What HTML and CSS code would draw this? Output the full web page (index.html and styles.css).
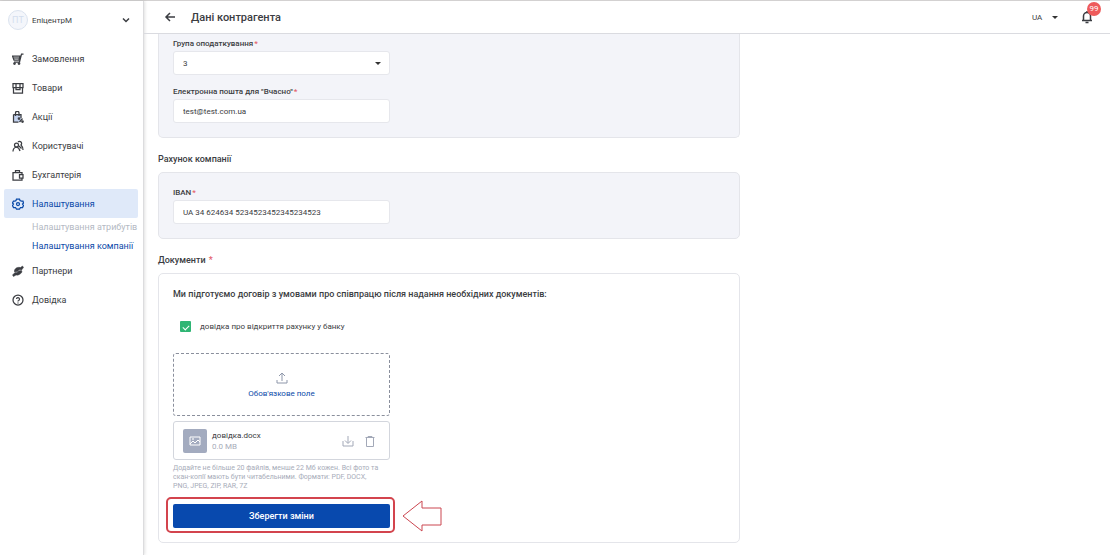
FILE: index.html
```html
<!DOCTYPE html>
<html lang="uk">
<head>
  <meta charset="UTF-8" />
  <meta name="viewport" content="width=device-width, initial-scale=1" />
  <title>Дані контрагента</title>
  <link rel="stylesheet" href="styles.css">
</head>
<body>

  <div class="layout">

    <aside class="sidebar">
      <button type="button" class="company">
        <span class="avatar">ПТ</span>
        <span class="company-name">ЕпіцентрМ</span>
        <svg class="chevron" viewBox="0 0 8 8"><path d="M1 2.500 4 5.500l3-3" /></svg>
      </button>

      <nav class="menu">
        <a href="#" class="menu-item">
          <svg class="icon" viewBox="0 0 24 24"><path d="M1 6h15l-2 8H4zM23 2h-4l-4 16H4" /><path d="M3 10h12" /><circle cx="5" cy="21" r="1.500" /><circle cx="14" cy="21" r="1.500" /></svg>
          Замовлення
        </a>
        <a href="#" class="menu-item">
          <svg class="icon" viewBox="0 0 24 24"><path d="M2 3h20v8H2zM3 11v11h18V11M8 3v8M16 3v8M8 11v4h8v-4" /></svg>
          Товари
        </a>
        <a href="#" class="menu-item">
          <svg class="icon" viewBox="0 0 24 24"><path class="tint" d="M3 7h15v15H3z" /><path d="M7 10V4a3 3 0 0 1 7 0v6M3 7h15v7M3 7v15h10" /><circle cx="14" cy="15" r="1.500" /><circle cx="21" cy="21" r="1.500" /><path d="m21 15-6 7" /></svg>
          Акції
        </a>
        <a href="#" class="menu-item">
          <svg class="icon" viewBox="0 0 24 24"><circle cx="9" cy="10" r="4" /><path d="M2 23c0-5 3-8 7-9 4 1 6 4 7 8M12 4a4 4 0 1 1 6 6c3 3 4 6 4 10M14 12l5 5" /></svg>
          Користувачі
        </a>
        <a href="#" class="menu-item">
          <svg class="icon" viewBox="0 0 24 24"><path d="M20 11V7H2v15h18v-4M7 7V3h8v4M22 11h-7v7h7z" /></svg>
          Бухгалтерія
        </a>
        <a href="#" class="menu-item active">
          <svg class="icon" viewBox="0 0 24 24"><path d="M9 2h6l1 3 3 1 3 0 1 4-2 2 2 3-2 4-4 0-2 3H9l-2-3-4 0-2-4 2-3-2-2 2-4 3 0 2-1z" /><circle cx="12" cy="12" r="3" /></svg>
          Налаштування
        </a>
        <div class="submenu">
          <a href="#" class="submenu-item muted">Налаштування атрибутів</a>
          <a href="#" class="submenu-item">Налаштування компанії</a>
        </div>
        <a href="#" class="menu-item">
          <svg class="icon" viewBox="0 0 24 24"><path class="solid" d="M5 10c3-5 7-6 12-5l4-3 2 3-4 5c-4-1-6 0-8 3l-6 1zM20 14c-3 5-8 7-12 6l-5 3-2-3 5-5c3 1 5 0 7-3l6-1z" /></svg>
          Партнери
        </a>
        <a href="#" class="menu-item">
          <svg class="icon" viewBox="0 0 24 24"><circle cx="12" cy="12" r="10" /><path d="M9 10a3 3 0 1 1 4 3q-1 0-1 2M12 17v2" /></svg>
          Довідка
        </a>
      </nav>
    </aside>

    <div class="page">

      <header class="top-bar">
        <a href="#" class="back" aria-label="Назад">
          <svg viewBox="0 0 12 12"><path d="M11 6H2M6 2 2 6l4 4" /></svg>
        </a>
        <h1>Дані контрагента</h1>
        <div class="lang">
          <select aria-label="Мова">
            <option>UA</option>
            <option>EN</option>
          </select>
        </div>
        <button type="button" class="bell" aria-label="Сповіщення">
          <svg viewBox="0 0 14 14"><path d="M2 10.500h10M3.500 10V6a3.500 3.500 0 0 1 7 0v4M7 2.500V1M5.500 12.500h3" /></svg>
          <span class="badge">99</span>
        </button>
      </header>

      <main class="content">
        <section class="card card-top">
          <div class="field">
            <label for="taxGroup">Група оподаткування<span class="req">*</span></label>
            <div class="select-wrap">
              <select id="taxGroup">
                <option>1</option>
                <option>2</option>
                <option selected>3</option>
              </select>
            </div>
          </div>
          <div class="field">
            <label for="email">Електронна пошта для "Вчасно"<span class="req">*</span></label>
            <input type="email" id="email" value="test@test.com.ua" />
          </div>
        </section>

        <h2>Рахунок компанії</h2>
        <section class="card">
          <div class="field">
            <label for="iban">IBAN<span class="req">*</span></label>
            <input type="text" id="iban" value="UA 34 624634 5234523452345234523" />
          </div>
        </section>

        <h2>Документи <span class="req">*</span></h2>
        <section class="card card-white">
          <p class="intro">Ми підготуємо договір з умовами про співпрацю після надання необхідних документів:</p>

          <label class="check">
            <input type="checkbox" checked />
            довідка про відкриття рахунку у банку
          </label>

          <div class="upload">
            <label class="dropzone">
              <input type="file" multiple />
              <svg viewBox="0 0 12 12"><path d="M6 9V1M3 4l3-3 3 3M1 8v3h10V8" /></svg>
              Обов'язкове поле
            </label>

            <div class="file">
              <span class="file-thumb">
                <svg viewBox="0 0 12 12"><path d="M1 2h10v8H1zM1 9l3-3 2 2 3-3 2 2" /><circle cx="4" cy="4" r="0.500" /></svg>
              </span>
              <div class="file-info">
                <span class="file-name">довідка.docx</span>
                <span class="file-size">0.0 MB</span>
              </div>
              <button type="button" class="file-btn" aria-label="Завантажити">
                <svg viewBox="0 0 12 12"><path d="M6 1v7M3 5.500l3 3 3-3M1 6v5h10V6" /></svg>
              </button>
              <button type="button" class="file-btn" aria-label="Видалити">
                <svg viewBox="0 0 12 12"><path d="M1.500 2.500h9M4 2.500v-1h4v1M2.500 2.500v9h7v-9" /></svg>
              </button>
            </div>

            <p class="hint">Додайте не більше 20 файлів, менше 22 Мб кожен. Всі фото та<br>скан-копії мають бути читабельними. Формати: PDF, DOCX,<br>PNG, JPEG, ZIP, RAR, 7Z</p>

            <div class="save-row">
              <button type="submit" class="save">Зберегти зміни</button>
              <span class="marker"></span>
              <svg class="arrow" viewBox="0 0 40 32"><path d="M1 16 20 1v7h19v17H20v6z" /></svg>
            </div>
          </div>
        </section>
      </main>

    </div>
  </div>

</body>
</html>
```
FILE: styles.css
```css
* {
  box-sizing: border-box;
}
body {
  margin: 0;
  background-color: #fff;
  color: #3b3d42;
  font-family: Roboto, "Liberation Sans", sans-serif;
  font-size: 9px;
}
a {
  color: inherit;
  text-decoration: none;
}
button, input, select {
  font: inherit;
  color: inherit;
}
button {
  padding: 0;
  border: none;
  background: none;
  cursor: pointer;
}
svg {
  display: block;
  fill: none;
  stroke: currentColor;
}
.layout {
  display: flex;
  min-height: 100vh;
  border-top: 1px solid #d3d1d1;
}

/* sidebar */
.sidebar {
  flex: 0 0 144px;
  border-right: 1px solid #dcdcde;
  box-shadow: 1px 0 3px rgba(0, 0, 0, 0.12);
}
.company {
  display: flex;
  align-items: center;
  width: 100%;
  height: 38px;
  padding: 0 13px 0 8px;
  font-size: 8px;
  text-align: left;
}
.avatar {
  width: 20px;
  height: 20px;
  margin-right: 4px;
  border: 1px solid #dbe3ef;
  border-radius: 50%;
  background-color: #f4f6fb;
  color: #d3deee;
  font-size: 9px;
  line-height: 18px;
  text-align: center;
}
.company-name {
  flex: 1;
}
.chevron {
  width: 8px;
  height: 8px;
  stroke-width: 1.5;
}
.menu {
  padding: 5px 5px 0 4px;
}
.menu-item {
  display: flex;
  align-items: center;
  gap: 8px;
  height: 29px;
  padding-left: 8px;
  border-radius: 2px;
}
.menu-item.active {
  background-color: #dfe9f9;
  color: #0a4aa8;
}
.icon {
  width: 12px;
  height: 12px;
  stroke-width: 2.5;
}
.icon .tint {
  fill: #c3d2ee;
  stroke: none;
}
.icon .solid {
  fill: currentColor;
  stroke-width: 1;
}
.submenu {
  padding-left: 28px;
}
.submenu-item {
  display: block;
  line-height: 19px;
  color: #0a4aa8;
  white-space: nowrap;
}
.submenu-item.muted {
  color: #b4b9c3;
}

/* header */
.page {
  flex: 1;
  min-width: 0;
}
.top-bar {
  display: flex;
  align-items: center;
  height: 33px;
  padding: 0 16px 0 20px;
  border-bottom: 1px solid #dadbe0;
}
.back svg {
  width: 12px;
  height: 12px;
  stroke-width: 1.5;
}
h1 {
  flex: 1;
  margin: 0 0 0 15px;
  font-size: 11px;
  font-weight: 500;
}
.lang select {
  width: 26px;
  padding: 0;
  border: none;
  background: none;
  appearance: none;
  font-size: 8px;
}
.lang, .select-wrap {
  position: relative;
}
.lang::after, .select-wrap::after {
  content: "";
  position: absolute;
  top: 50%;
  right: 0;
  margin-top: -1px;
  border: 3px solid transparent;
  border-top-color: #333;
  border-bottom: none;
  pointer-events: none;
}
.bell {
  position: relative;
  margin-left: 22px;
}
.bell svg {
  width: 14px;
  height: 14px;
  stroke-width: 1.5;
}
.badge {
  position: absolute;
  top: -8px;
  right: -7px;
  width: 14px;
  height: 14px;
  border-radius: 50%;
  background-color: #ee5b5b;
  color: #fff;
  font-size: 8px;
  line-height: 14px;
}

/* form */
.content {
  max-width: 610px;
  padding: 0 14px 12px;
}
h2 {
  margin: 15px 0 6px;
  font-size: 9px;
  line-height: 13px;
  font-weight: 500;
}
.card {
  padding: 14px;
  border: 1px solid #e4e5ea;
  border-radius: 5px;
  background-color: #f3f4f9;
}
.card-top {
  display: grid;
  gap: 11px;
  padding-top: 4px;
  border-top: none;
  border-radius: 0 0 5px 5px;
}
.card-white {
  background-color: #fff;
}
.field {
  max-width: 217px;
}
.field label {
  display: block;
  margin-bottom: 2px;
  font-size: 8px;
  line-height: 11px;
  font-weight: 500;
}
.req {
  margin-left: 1px;
  color: #e35d6a;
}
.field input, .field select {
  display: block;
  width: 100%;
  height: 24px;
  padding: 0 9px;
  border: 1px solid #e6e7ec;
  border-radius: 3px;
  background-color: #fff;
  appearance: none;
  font-size: 8px;
}
.select-wrap::after {
  right: 9px;
}
.intro {
  margin: 0;
  font-size: 9px;
  line-height: 13px;
  font-weight: 500;
}
.check {
  display: flex;
  align-items: center;
  gap: 9px;
  margin: 19px 0 20px;
  padding-left: 7px;
  font-size: 8px;
  line-height: 13px;
}
.check input {
  display: grid;
  place-items: center;
  width: 11px;
  height: 11px;
  margin: 0;
  border-radius: 1px;
  background-color: #2fb574;
  appearance: none;
}
.check input:checked::after {
  content: "";
  width: 5px;
  height: 3px;
  border: solid #fff;
  border-width: 0 0 1px 1px;
  transform: rotate(-45deg);
}
.upload {
  max-width: 217px;
}
.dropzone {
  display: flex;
  flex-direction: column;
  align-items: center;
  justify-content: center;
  gap: 5px;
  height: 63px;
  border: 1px dashed #8a8f9c;
  border-radius: 3px;
  color: #0a4aa8;
  font-size: 8px;
  cursor: pointer;
}
.dropzone input {
  display: none;
}
.dropzone svg {
  width: 12px;
  height: 12px;
  color: #8e97aa;
}
.file {
  display: flex;
  align-items: center;
  height: 39px;
  margin-top: 5px;
  padding: 0 13px 0 9px;
  border: 1px solid #d3d6dd;
  border-radius: 3px;
}
.file-thumb {
  display: grid;
  place-items: center;
  width: 24px;
  height: 24px;
  border-radius: 2px;
  background-color: #a3abbf;
  color: #fff;
}
.file svg {
  width: 12px;
  height: 12px;
}
.file-info {
  display: flex;
  flex: 1;
  flex-direction: column;
  margin-left: 5px;
  font-size: 8px;
  line-height: 11px;
}
.file-size {
  color: #a7acb9;
}
.file-btn {
  margin-left: 10px;
  color: #a3a9b8;
}
.hint {
  margin: 4px 0 13px;
  color: #a7acb9;
  font-size: 7px;
  line-height: 9px;
}
.save-row {
  position: relative;
}
.save {
  display: block;
  width: 100%;
  height: 24px;
  border-radius: 2px;
  background-color: #0849ae;
  color: #fff;
  font-size: 9px;
  font-weight: 500;
}
/* callout around the save button */
.marker {
  position: absolute;
  inset: -7px -5px -5px -7px;
  border: 2px solid #d3444d;
  border-radius: 5px;
  pointer-events: none;
}
.arrow {
  position: absolute;
  top: -4px;
  left: 100%;
  width: 40px;
  height: 32px;
  margin-left: 12px;
  stroke: #cb4650;
}
```
